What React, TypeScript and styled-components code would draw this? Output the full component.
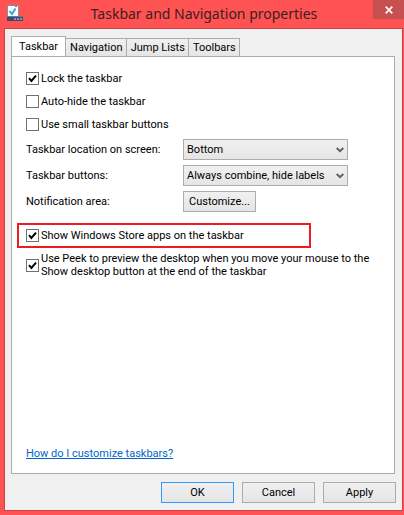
import React, { useState } from "react";
import styled, { createGlobalStyle, css } from "styled-components";

const GlobalStyle = createGlobalStyle`
  * { box-sizing: border-box; }
  body { margin: 0; }
  button, select, input { font: inherit; color: inherit; margin: 0; }
`;

const Window = styled.div`
  min-height: 100vh;
  display: flex;
  flex-direction: column;
  padding: 0 1px 4px 4px;
  background: #ff5252;
  color: #000;
  font: 11px/13px Roboto, "Noto Sans", sans-serif;
`;

const TitleBar = styled.header`
  display: grid;
  grid-template-columns: 28px 1fr 31px;
  height: 28px;
  margin-right: -1px;
  padding-left: 3px;
`;

const AppIcon = styled.svg`
  width: 16px;
  height: 16px;
  margin-top: 5px;
`;

const Title = styled.h1`
  margin: 0;
  font: 400 14px/28px "Noto Sans", "Open Sans", sans-serif;
  text-align: center;
  white-space: nowrap;
  color: #3c2020;
`;

const CloseButton = styled.button`
  display: flex;
  align-items: center;
  justify-content: center;
  height: 19px;
  padding: 0;
  border: 0;
  background: #c75050;
`;

const Client = styled.main`
  flex: 1;
  display: flex;
  flex-direction: column;
  padding: 7px 6px;
  border: 1px solid #c94444;
  background: #f0f0f0;
`;

const TabStrip = styled.div`
  display: flex;
  align-items: flex-end;
  height: 21px;
  margin-bottom: -1px;
`;

const Tab = styled.button<{ $active: boolean }>`
  height: 19px;
  padding: 0 3px 0 4px;
  border: 1px solid #acacac;
  border-left-width: 0;
  background: linear-gradient(#f0f0f0, #e5e5e5);
  white-space: nowrap;
  line-height: 17px;
  ${(p) =>
    p.$active &&
    css`
      height: 21px;
      padding: 0 7px;
      border-left-width: 1px;
      border-bottom-color: #fff;
      background: #fff;
    `}
`;

const Panel = styled.section`
  flex: 1;
  display: flex;
  flex-direction: column;
  align-items: flex-start;
  margin-right: 1px;
  padding: 15px 14px 13px;
  border: 1px solid #acacac;
  background: #fff;
`;

const CheckList = styled.div`
  display: flex;
  flex-direction: column;
  gap: 10px;
`;

const CheckLabel = styled.label`
  display: flex;
  align-items: center;
  gap: 2px;
`;

const CheckBox = styled.input`
  appearance: none;
  flex: none;
  width: 13px;
  height: 13px;
  border: 1px solid #707070;
  background: #fff;
  &:checked {
    background: #fff
      url("data:image/svg+xml,%3Csvg xmlns='http://www.w3.org/2000/svg' viewBox='0 0 11 11'%3E%3Cpath d='M2 5.2 4.4 8 9 2.6' fill='none' stroke='%23000' stroke-width='2'/%3E%3C/svg%3E")
      center / 11px 11px;
  }
`;

const Settings = styled.div`
  display: grid;
  grid-template-columns: 157px minmax(0, 165px);
  align-items: center;
  row-gap: 5px;
  margin-top: 8px;
`;

const SelectBox = styled.div`
  display: grid;
  align-items: center;
  & > * { grid-area: 1 / 1; }
`;

const Select = styled.select`
  appearance: none;
  width: 100%;
  height: 21px;
  padding: 0 16px 0 3px;
  border: 1px solid #acacac;
  border-radius: 0;
  background: linear-gradient(#f0f0f0, #e5e5e5);
`;

const Chevron = styled.svg`
  width: 8px;
  height: 6px;
  margin-right: 4px;
  justify-self: end;
  pointer-events: none;
`;

const Button = styled.button<{ $primary?: boolean }>`
  width: 73px;
  height: 21px;
  padding: 0;
  border: 1px solid ${(p) => (p.$primary ? "#3399ff" : "#acacac")};
  background: linear-gradient(#f0f0f0, #e5e5e5);
`;

const Highlight = styled.div`
  width: 294px;
  margin: 11px 0 0 -9px;
  padding: 4px 7px;
  border: 2px solid #ed1c24;
`;

const PeekOption = styled.div`
  margin-top: 4px;
`;

const HelpLink = styled.a`
  margin-top: auto;
  color: #0066cc;
`;

const Actions = styled.footer`
  display: flex;
  justify-content: flex-end;
  gap: 8px;
  padding-top: 8px;
`;

type CheckProps = { text: React.ReactNode; on?: boolean };

const Check = ({ text, on }: CheckProps) => (
  <CheckLabel>
    <CheckBox type="checkbox" defaultChecked={on} />
    <span>{text}</span>
  </CheckLabel>
);

const Dropdown = ({ id, options }: { id: string; options: string[] }) => (
  <SelectBox>
    <Select id={id}>
      {options.map((o) => (
        <option key={o}>{o}</option>
      ))}
    </Select>
    <Chevron viewBox="0 0 8 6" aria-hidden="true">
      <path d="M0.7 1 4 4.2 7.3 1" fill="none" stroke="#606060" strokeWidth="2" />
    </Chevron>
  </SelectBox>
);

const tabs = ["Taskbar", "Navigation", "Jump Lists", "Toolbars"];

export default function App() {
  const [active, setActive] = useState(tabs[0]);
  return (
    <>
      <GlobalStyle />
      <Window>
        <TitleBar>
          <AppIcon viewBox="0 0 16 16" aria-hidden="true">
            <path d="M0 0h12v11H0z" fill="#8b8f98" />
            <path d="M1 1h10v10H1z" fill="#f7fbfd" />
            <path d="M8 1h2v1H8z" fill="#c75050" />
            <path d="m2.5 6 2.5 3L8.5 3.5" fill="none" stroke="#2ba0d8" strokeWidth="1.8" />
            <path d="M0 11h16v5H0z" fill="#3d4c6c" />
            <path d="M0 11h16v1H0z" fill="#66789a" />
            <path d="M7 13h2v2H7zM10 13h2v2h-2zM13 13h2v2h-2z" fill="#8794aa" />
          </AppIcon>
          <Title>Taskbar and Navigation properties</Title>
          <CloseButton aria-label="Close">
            <svg width="8" height="8" viewBox="0 0 8 8" aria-hidden="true">
              <path d="m.7.7 6.6 6.6M7.3.7.7 7.3" stroke="#fff" strokeWidth="1.7" />
            </svg>
          </CloseButton>
        </TitleBar>
        <Client>
          <TabStrip role="tablist">
            {tabs.map((t) => (
              <Tab
                key={t}
                role="tab"
                aria-selected={t === active}
                $active={t === active}
                onClick={() => setActive(t)}
              >
                {t}
              </Tab>
            ))}
          </TabStrip>
          <Panel role="tabpanel" aria-label={active}>
            <CheckList>
              <Check text="Lock the taskbar" on />
              <Check text="Auto-hide the taskbar" />
              <Check text="Use small taskbar buttons" />
            </CheckList>
            <Settings>
              <label htmlFor="location">Taskbar location on screen:</label>
              <Dropdown id="location" options={["Bottom", "Left", "Right", "Top"]} />
              <label htmlFor="buttons">Taskbar buttons:</label>
              <Dropdown
                id="buttons"
                options={["Always combine, hide labels", "Combine when taskbar is full", "Never combine"]}
              />
              <label htmlFor="notify">Notification area:</label>
              <Button id="notify" aria-label="Customize...">Customize...</Button>
            </Settings>
            <Highlight>
              <Check text="Show Windows Store apps on the taskbar" on />
            </Highlight>
            <PeekOption>
              <Check
                on
                text={
                  <>
                    Use Peek to preview the desktop when you move your mouse to the
                    <br />
                    Show desktop button at the end of the taskbar
                  </>
                }
              />
            </PeekOption>
            <HelpLink href="#help">How do I customize taskbars?</HelpLink>
          </Panel>
          <Actions>
            <Button $primary>OK</Button>
            <Button>Cancel</Button>
            <Button>Apply</Button>
          </Actions>
        </Client>
      </Window>
    </>
  );
}
